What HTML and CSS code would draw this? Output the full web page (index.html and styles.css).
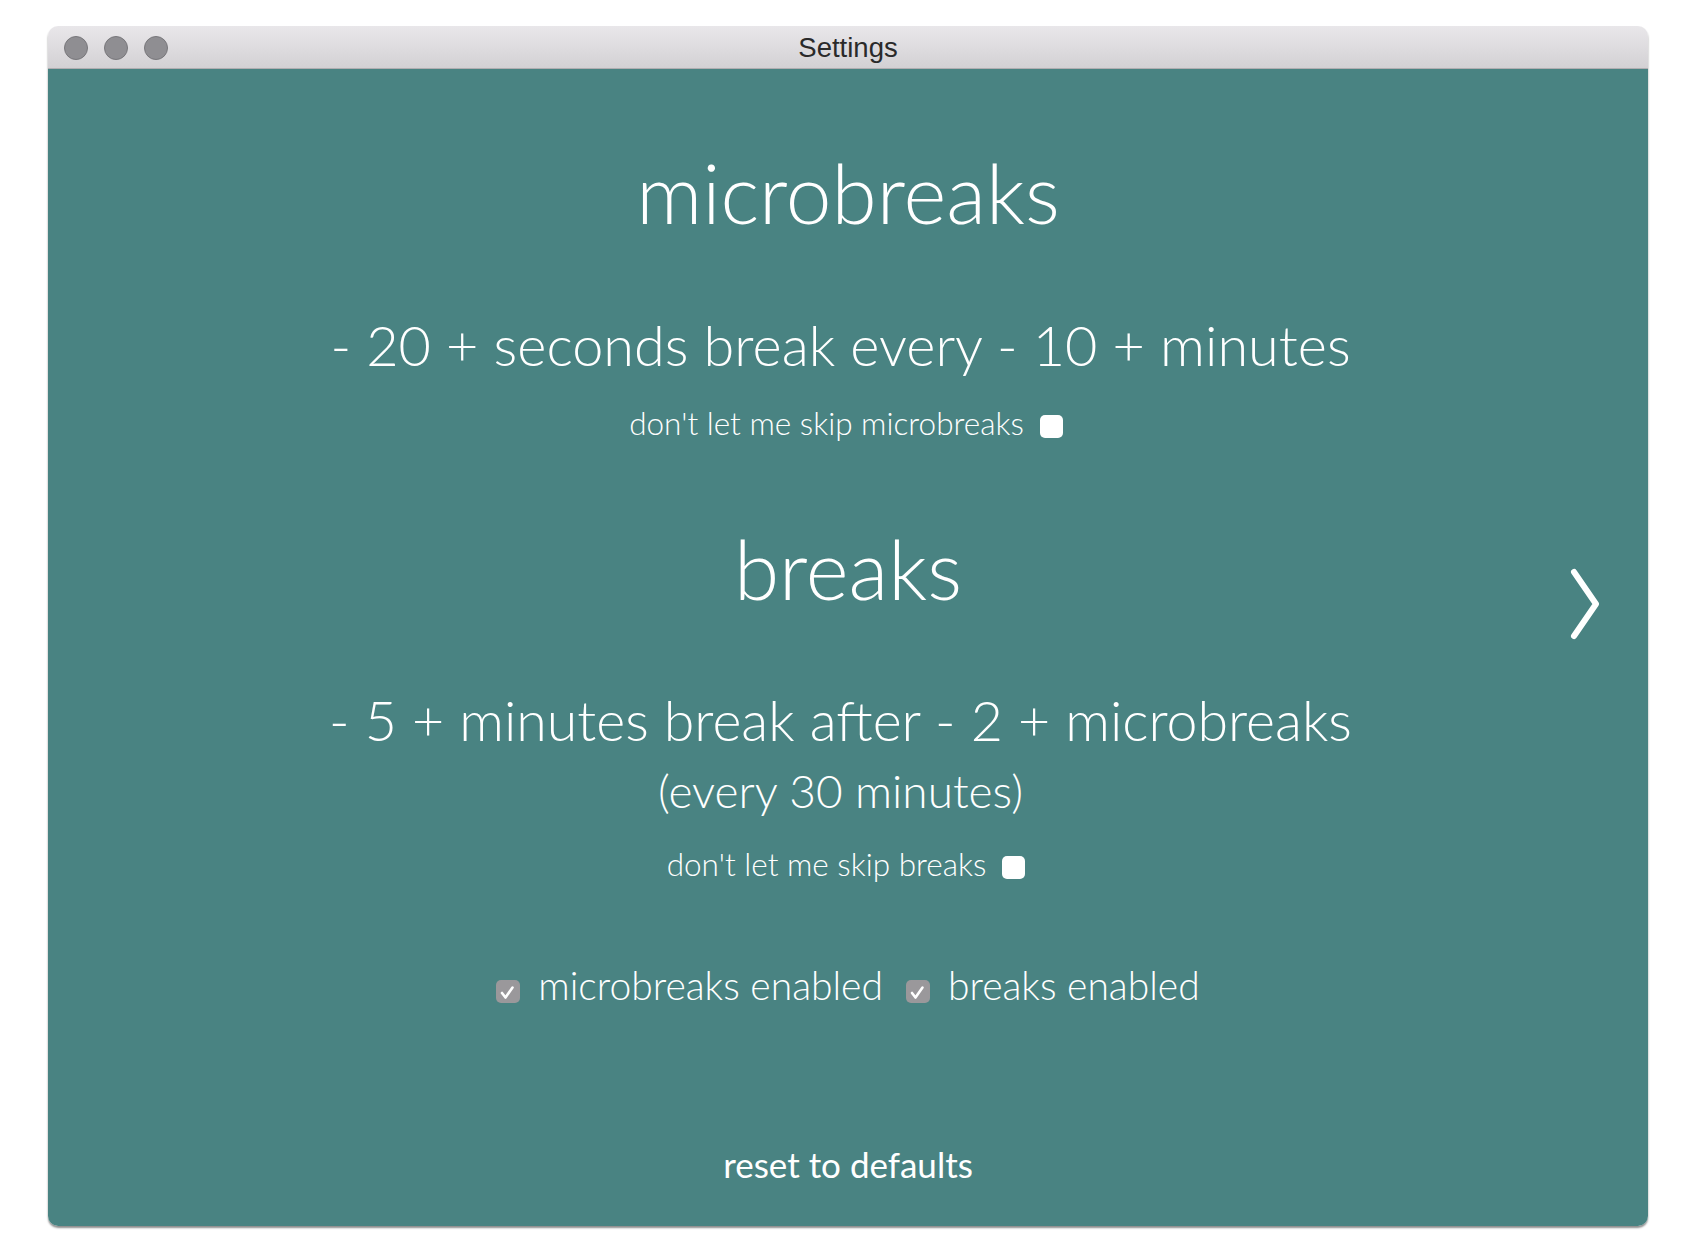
FILE: index.html
```html
<!DOCTYPE html>
<html>
<head>
<meta charset="utf-8">
<title>Settings</title>
<link rel="stylesheet" href="styles.css">
</head>
<body>
<div class="window">
  <div class="titlebar">
    <div class="lights">
      <span class="light"></span>
      <span class="light"></span>
      <span class="light"></span>
    </div>
    <div class="title">Settings</div>
  </div>
  <div class="content">
    <h1 class="heading h-micro">microbreaks</h1>
    <div class="line line1"><span class="btn">-</span> 20 <span class="btn">+</span> seconds break every <span class="btn">-</span> 10 <span class="btn">+</span> minutes</div>
    <label class="skip skip1">don't let me skip microbreaks <span class="box"></span></label>
    <h1 class="heading h-breaks">breaks</h1>
    <div class="line line2"><span class="btn">-</span> 5 <span class="btn">+</span> minutes break after <span class="btn">-</span> 2 <span class="btn">+</span> microbreaks</div>
    <div class="line every">(every 30 minutes)</div>
    <label class="skip skip2">don't let me skip breaks <span class="box"></span></label>
    <div class="enabled">
      <span class="cbox"><svg viewBox="0 0 23 23" width="23" height="23"><polyline points="6,13 9.5,17.5 16.5,7.5" fill="none" stroke="#fff" stroke-width="2.6" stroke-linecap="round" stroke-linejoin="round"/></svg></span>
      <span class="etext">microbreaks enabled</span>
      <span class="cbox"><svg viewBox="0 0 23 23" width="23" height="23"><polyline points="6,13 9.5,17.5 16.5,7.5" fill="none" stroke="#fff" stroke-width="2.6" stroke-linecap="round" stroke-linejoin="round"/></svg></span>
      <span class="etext">breaks enabled</span>
    </div>
    <div class="reset">reset to defaults</div>
    <svg class="chevron" viewBox="0 0 30 72" width="30" height="72"><polyline points="4,4 26,36 4,68" fill="none" stroke="#fff" stroke-width="6" stroke-linecap="round" stroke-linejoin="round"/></svg>
  </div>
</div>
</body>
</html>
```
FILE: styles.css
```css
html, body {
  margin: 0;
  padding: 0;
  background: #ffffff;
}
body {
  padding-top: 26px;
  padding-left: 48px;
  height: 1252px;
  box-sizing: border-box;
}
.window {
  width: 1600px;
  height: 1200px;
  display: flex;
  flex-direction: column;
  border-radius: 10px;
  overflow: hidden;
  box-shadow: 0 2px 2px rgba(0,0,0,0.45);
}
.titlebar {
  height: 42px;
  flex: 0 0 42px;
  background: linear-gradient(#e9e7ea, #d3d1d4);
  border-bottom: 1px solid #b0aeb1;
  position: relative;
  display: flex;
  align-items: center;
  justify-content: center;
}
.lights {
  position: absolute;
  left: 16px;
  top: 10px;
  display: flex;
  gap: 16px;
}
.light {
  width: 22px;
  height: 22px;
  border-radius: 50%;
  background: #8f8e92;
  border: 1px solid #78777b;
}
.title {
  font-family: "Liberation Sans", Arial, sans-serif;
  font-size: 27.5px;
  color: #2a2a2a;
  padding-top: 2px;
}
.content {
  flex: 1;
  background: #498382;
  position: relative;
  display: flex;
  flex-direction: column;
  align-items: center;
  font-family: Lato, "Open Sans", sans-serif;
  font-weight: 300;
  color: #ffffff;
  padding-top: 81px;
}
.heading {
  margin: 0;
  font-size: 82px;
  font-weight: 300;
  line-height: 84px;
}
.line {
  font-size: 55.8px;
  line-height: 57px;
  padding-right: 15px;
}
.line1 { margin-top: 82px; }
.skip {
  font-size: 31.5px;
  line-height: 34px;
  display: flex;
  align-items: baseline;
  gap: 16px;
  padding-right: 4px;
}
.skip1 { margin-top: 33px; }
.h-breaks { margin-top: 86px; }
.line2 { margin-top: 81px; font-size: 55.5px; }
.every { margin-top: 14px; font-size: 46px; }
.skip2 { margin-top: 28px; }
.box {
  width: 23px;
  height: 23px;
  border-radius: 5px;
  background: #ffffff;
  align-self: flex-end;
  margin-bottom: 2px;
}
.enabled {
  margin-top: 82px;
  display: flex;
  align-items: flex-end;
  font-size: 39px;
  line-height: 44px;
}
.cbox {
  width: 24px;
  height: 23px;
  border-radius: 5px;
  background: #9a989b;
  margin-bottom: 4px;
  display: block;
}
.cbox svg { display: block; }
.etext { margin-left: 18px; margin-right: 23px; }
.etext:last-child { margin-right: 0; }
.reset {
  margin-top: 140px;
  font-size: 35px;
  font-weight: 400;
  line-height: 34px;
}
.chevron {
  position: absolute;
  left: 1522px;
  top: 499px;
}
```
